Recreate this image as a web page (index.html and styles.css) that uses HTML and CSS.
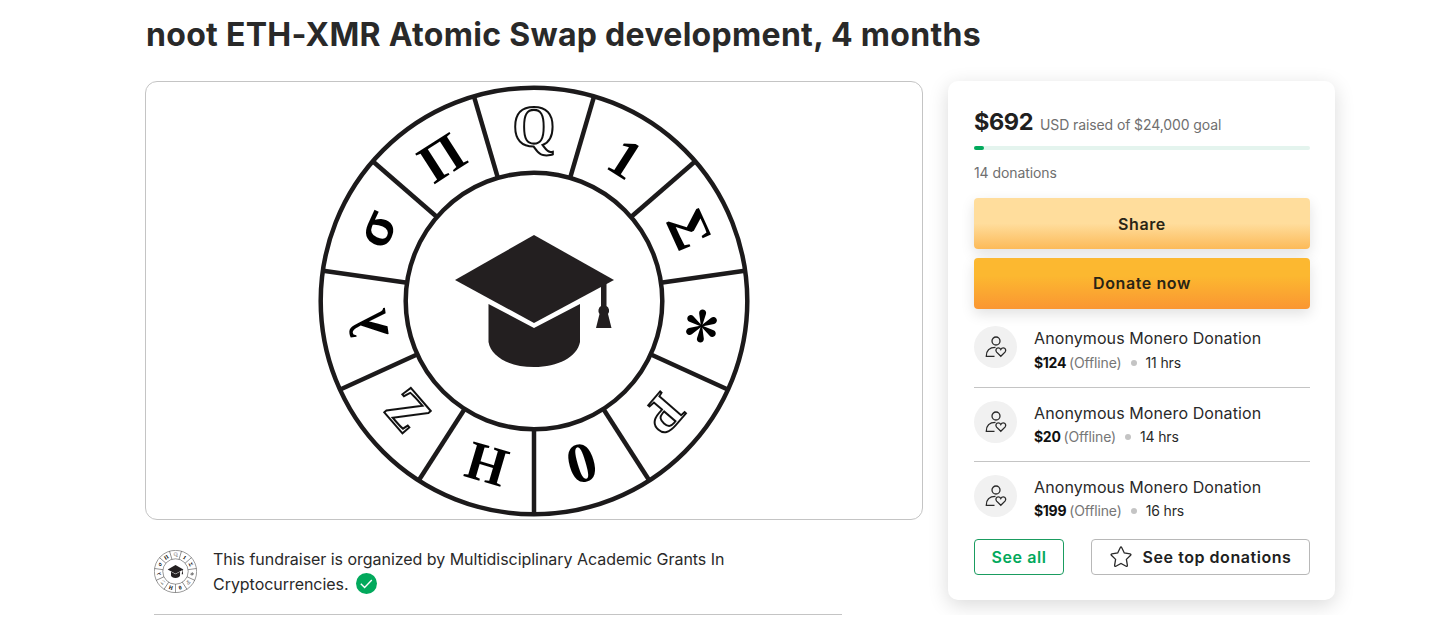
FILE: index.html
```html
<!DOCTYPE html>
<html lang="en">

<head>
    <meta charset="UTF-8">
    <meta name="viewport" content="width=device-width, initial-scale=1.0">
    <title>noot ETH-XMR Atomic Swap development, 4 months</title>
    <link rel="stylesheet" href="styles.css">
</head>

<body>
    <main class="container">
        <h1 class="title">noot ETH-XMR Atomic Swap development, 4 months</h1>
        <div class="campaign">
            <section class="story">
                <figure class="cover">
                    <svg width="434" height="434" viewBox="-217 -217 434 434">
                        <g id="wheel">
                            <g class="wheel-lines">
                                <circle r="213.300"/>
                                <circle r="128.300"/>
                                <path id="spoke" d="M0 128V213"/>
                                <use href="#spoke" transform="rotate(32.73)"/>
                                <use href="#spoke" transform="rotate(65.45)"/>
                                <use href="#spoke" transform="rotate(98.18)"/>
                                <use href="#spoke" transform="rotate(130.91)"/>
                                <use href="#spoke" transform="rotate(163.64)"/>
                                <use href="#spoke" transform="rotate(196.36)"/>
                                <use href="#spoke" transform="rotate(229.09)"/>
                                <use href="#spoke" transform="rotate(261.82)"/>
                                <use href="#spoke" transform="rotate(294.55)"/>
                                <use href="#spoke" transform="rotate(327.27)"/>
                            </g>
                            <g class="wheel-text">
                                <text class="outline" transform="translate(0 -174) scale(1 1.06)" y="18">Q</text>
                                <text transform="translate(91 -142) rotate(32.7)" y="18">1</text>
                                <text transform="translate(155 -71) rotate(65.5)" y="18">Σ</text>
                                <text class="outline" transform="translate(129 113) rotate(130.9) scale(.98 .94)" y="18">P</text>
                                <text transform="translate(48 163) rotate(163.6) scale(1.05 1.03)" y="19">0</text>
                                <text transform="translate(-47 163) rotate(196.4) scale(.94 1)" y="18">H</text>
                                <text class="outline" transform="translate(-127 110) rotate(229.1)" y="18">Z</text>
                                <text transform="translate(-166 23) rotate(261.8)" y="19">λ</text>
                                <text class="sigma" transform="translate(-154 -71) rotate(294.5)" y="13">σ</text>
                                <text transform="translate(-92 -143) rotate(327.3)" y="18">Π</text>
                            </g>
                            <g transform="translate(167.500 25) rotate(5)">
                                <path id="petal" d="M-.6 0L-3.400-12.300a3.500 3.500 0 1 1 6.800 0L.6 0z"/>
                                <use href="#petal" transform="rotate(60)"/>
                                <use href="#petal" transform="rotate(120)"/>
                                <use href="#petal" transform="rotate(180)"/>
                                <use href="#petal" transform="rotate(240)"/>
                                <use href="#petal" transform="rotate(300)"/>
                            </g>
                            <g fill="#231f20">
                                <path d="M0-66L80-21 0 22-79-21z"/>
                                <path d="M-45.500 3L0 27 46 3V41C43 56 24 66 0 66S-43 56-45.500 41z"/>
                                <path d="M67-20h5.500V5a5.500 5.500 0 0 1 1.500 8l3.500 14H62l3.500-14A5.500 5.500 0 0 1 67 5z"/>
                            </g>
                        </g>
                    </svg>
                </figure>
                <div class="organizer">
                    <svg class="avatar" width="43" height="43" viewBox="-217 -217 434 434"><use href="#wheel"/></svg>
                    <p>This fundraiser is organized by Multidisciplinary Academic Grants In<br>Cryptocurrencies.
                        <svg class="verified" width="21" height="21" viewBox="0 0 21 21">
                            <circle cx="10.500" cy="10.500" r="10.500"/>
                            <path d="M4.800 10.700l3.800 3.700 7.200-7.300"/>
                        </svg>
                    </p>
                </div>
            </section>

            <aside class="card">
                <p class="raised"><strong>$692</strong> <span>USD raised of $24,000 goal</span></p>
                <div class="progress"><div class="progress-bar"></div></div>
                <p class="count">14 donations</p>
                <button class="btn btn-share">Share</button>
                <button class="btn btn-donate">Donate now</button>
                <ul class="donations">
                    <li>
                        <span class="donor">
                            <svg width="22" height="22" viewBox="0 0 22 22">
                                <g id="donor">
                                    <circle cx="11" cy="5" r="4"/>
                                    <path d="M9.500 20.300H1.300c0-6 3.200-9 9.200-9"/>
                                    <path d="M15.800 20.300l-4.200-4.200c-1.500-1.700-.4-4.300 1.700-4.300 1.200 0 2 .7 2.500 1.700.5-1 1.300-1.700 2.500-1.700 2.100 0 3.200 2.600 1.700 4.300z"/>
                                </g>
                            </svg>
                        </span>
                        <div>
                            <p class="name">Anonymous Monero Donation</p>
                            <p class="meta"><b>$124</b> <span class="offline">(Offline)</span><i class="dot"></i>11 hrs</p>
                        </div>
                    </li>
                    <li>
                        <span class="donor"><svg width="22" height="22"><use href="#donor"/></svg></span>
                        <div>
                            <p class="name">Anonymous Monero Donation</p>
                            <p class="meta"><b>$20</b> <span class="offline">(Offline)</span><i class="dot"></i>14 hrs</p>
                        </div>
                    </li>
                    <li>
                        <span class="donor"><svg width="22" height="22"><use href="#donor"/></svg></span>
                        <div>
                            <p class="name">Anonymous Monero Donation</p>
                            <p class="meta"><b>$199</b> <span class="offline">(Offline)</span><i class="dot"></i>16 hrs</p>
                        </div>
                    </li>
                </ul>
                <div class="actions">
                    <button class="btn-small btn-all">See all</button>
                    <button class="btn-small btn-top">
                        <svg width="22" height="22" viewBox="0 0 22 22">
                            <path d="M10.200 1.700q.8-1.400 1.600 0l2.500 5.300 5.800.8q1.400.4.500 1.500l-4.200 4.100 1 5.900q0 1.500-1.300.9L11 17.400l-5.100 2.800q-1.400.6-1.300-.9l1-5.900L1.400 9.300q-.9-1.100.5-1.500L7.700 7z"/>
                        </svg>
                        <span>See top donations</span>
                    </button>
                </div>
            </aside>
        </div>
    </main>
</body>

</html>
```
FILE: styles.css
```css
html {
    box-sizing: border-box;
    font-family: Inter, sans-serif;
    font-size: 16px;
    color: #292929;
    background-color: #fff;
}

*,
*::before,
*::after {
    box-sizing: inherit;
}

body {
    margin: 0;
    overflow: hidden;
}

h1,
p,
ul,
figure {
    margin: 0;
    padding: 0;
}

svg {
    display: block;
    flex: none;
}

button {
    font-family: inherit;
    padding: 0;
}

.container {
    width: 1190px;
    margin-left: 145px;
}

.title {
    padding: 15px 0 0 1px;
    height: 81px;
    font-size: 32px;
    line-height: 40px;
    font-weight: 700;
    letter-spacing: .3px;
    white-space: nowrap;
}

.campaign {
    display: grid;
    grid-template-columns: 778px 387px;
    column-gap: 25px;
    align-items: start;
}

/* wheel */

.cover {
    display: flex;
    justify-content: center;
    height: 439px;
    padding-top: 2px;
    border: 1px solid #c4c4c4;
    border-radius: 12px;
}

.wheel-lines {
    fill: none;
    stroke: #1c1a1b;
    stroke-width: 4.5;
}

.wheel-text {
    font-family: "Liberation Serif", serif;
    font-size: 55px;
    font-weight: bold;
    text-anchor: middle;
    fill: #000;
}

.wheel-text .outline {
    fill: none;
    stroke: #111;
    stroke-width: 2;
}

.wheel-text .sigma {
    font-family: "Liberation Sans", sans-serif;
    font-size: 50px;
}

.organizer {
    display: flex;
    gap: 16px;
    width: 688px;
    height: 95px;
    margin-left: 9px;
    padding-top: 27px;
    border-bottom: 1px solid #c4c4c4;
}

.organizer p {
    font-size: 16px;
    line-height: 25px;
    letter-spacing: -.04px;
    white-space: nowrap;
}

.avatar {
    margin-top: 3px;
}

.verified {
    display: inline-block;
    margin-left: 3px;
    vertical-align: -4px;
}

.verified circle {
    fill: #02a95c;
}

.verified path {
    fill: none;
    stroke: #fff;
    stroke-width: 1.4;
}

/* donation card */

.card {
    height: 519px;
    padding: 25px 25px 0 26px;
    border-radius: 10px;
    box-shadow: 0 5px 20px rgba(0, 0, 0, .15);
}

.raised {
    height: 40px;
    line-height: 32px;
    font-size: 14px;
    letter-spacing: -.1px;
    color: #6f6f6f;
    white-space: nowrap;
}

.raised strong {
    margin-right: 3px;
    font-size: 23.5px;
    letter-spacing: -.4px;
    color: #202020;
}

.progress {
    height: 4px;
    border-radius: 2px;
    background-color: #e4f4ee;
}

.progress-bar {
    width: 10px;
    height: 4px;
    border-radius: 2px;
    background-color: #02a95c;
}

.count {
    height: 48px;
    padding-top: 13px;
    line-height: 20px;
    font-size: 14px;
    letter-spacing: -.08px;
    color: #6f6f6f;
}

.btn {
    display: block;
    width: 100%;
    height: 51px;
    border: 0;
    border-radius: 4px;
    font-size: 16px;
    font-weight: 600;
    letter-spacing: .6px;
    color: #292415;
    box-shadow: 0 5px 14px rgba(0, 0, 0, .12);
}

.btn-share {
    margin-bottom: 9px;
    background: linear-gradient(#ffdd9c 50%, #fcba59);
}

.btn-donate {
    padding-bottom: 1px;
    background: linear-gradient(#fcb830 35%, #fa9632);
}

.donations {
    list-style: none;
    margin-top: 4px;
}

.donations li {
    display: flex;
    gap: 17px;
    height: 74px;
    padding-top: 13px;
    border-bottom: 1px solid #c4c4c4;
}

.donations li:first-child {
    height: 75px;
}

.donations li:last-child {
    border-bottom: 0;
}

.donor {
    display: flex;
    align-items: center;
    justify-content: center;
    flex: none;
    width: 43px;
    height: 42px;
    border-radius: 50%;
    background-color: #f1f1f1;
}

.donor svg,
.btn-top svg {
    fill: none;
    stroke: #292929;
    stroke-width: 1.3;
}

.name {
    line-height: 25px;
    font-size: 16px;
    letter-spacing: .1px;
    white-space: nowrap;
}

.meta {
    display: flex;
    align-items: center;
    line-height: 23px;
    font-size: 14px;
    letter-spacing: -.15px;
    white-space: nowrap;
}

.donations li + li .meta {
    line-height: 22px;
}

.meta b {
    margin-right: 3px;
    letter-spacing: -.3px;
    color: #111;
}

.offline {
    color: #767676;
}

.dot {
    width: 6px;
    height: 6px;
    margin: 0 9px;
    border-radius: 50%;
    background-color: #c4c4c4;
}

.actions {
    display: flex;
    justify-content: space-between;
    margin-top: 3px;
}

.btn-small {
    display: flex;
    align-items: center;
    justify-content: center;
    gap: 11px;
    height: 36px;
    border: 1px solid #b8b8b8;
    border-radius: 4px;
    background-color: #fff;
    font-size: 16px;
    font-weight: 600;
    letter-spacing: .55px;
    color: #202020;
    white-space: nowrap;
}

.btn-all {
    width: 90px;
    border-color: #1a9c60;
    color: #02a95c;
}

.btn-top {
    width: 219px;
}
```
